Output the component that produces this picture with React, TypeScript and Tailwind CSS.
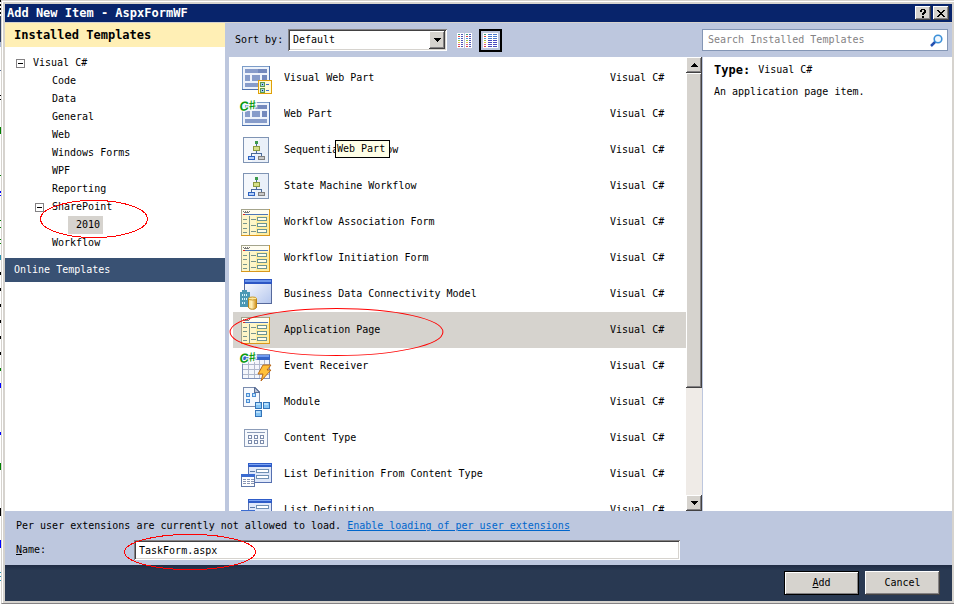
import { useState } from "react";
import type { ReactNode } from "react";

const BEVEL =
  "bg-[#d6d3ce] shadow-[inset_-1px_-1px_#424142,inset_1px_1px_#fff,inset_-2px_-2px_#848284]";
const SUNKEN =
  "bg-white shadow-[inset_1px_1px_#848284,inset_-1px_-1px_#fff,inset_2px_2px_#424142,inset_-2px_-2px_#d6d3ce]";

function Icon({ children }: { children: ReactNode }) {
  return (
    <svg viewBox="0 0 36 36" className="h-9 w-9 shrink-0" shapeRendering="crispEdges" aria-hidden="true">
      {children}
    </svg>
  );
}

function SharpBadge() {
  return (
    <text
      x="2"
      y="15"
      className="font-['Liberation_Sans',sans-serif] text-[13px] font-bold italic"
      fill="#0a9a10"
      stroke="#fff"
      strokeWidth="2"
      paintOrder="stroke"
      transform="rotate(-8 3 15)"
    >
      C#
    </text>
  );
}

function WebPartBase() {
  return (
    <>
      <rect x="4.5" y="6.5" width="27" height="23" fill="#eef3fb" stroke="#4f72ad" />
      <path d="M4.5 29V6.5H31" fill="none" stroke="#7c9cc8" />
      <g fill="#879cca">
        <rect x="7" y="9" width="22" height="4" />
        <rect x="7" y="15" width="5" height="6" />
        <rect x="14" y="15" width="8" height="6" />
        <rect x="24" y="15" width="5" height="6" />
        <rect x="7" y="23" width="22" height="4" />
      </g>
      <path d="M20 9h9v4h-9zM24 15h5v6h-5z" fill="#7389bd" />
    </>
  );
}

function VisualWebPartIcon() {
  return (
    <Icon>
      <WebPartBase />
      <rect x="20.5" y="20.5" width="13" height="13" fill="#fffbd6" stroke="#e0a008" />
      <path d="M22 22h5v5h-5zM22 28h5v5h-5z" fill="#5f9a4a" />
      <path d="M23 23h3v3h-3zM23 29h3v3h-3z" fill="#9fd0e8" />
      <path d="M24 24h1v1h-1zM24 30h1v1h-1z" fill="#00206a" />
      <path d="M28 24h3v1h-3zM28 30h3v1h-3z" fill="#3d6fd0" />
    </Icon>
  );
}

function WebPartIcon() {
  return (
    <Icon>
      <WebPartBase />
      <SharpBadge />
    </Icon>
  );
}

function WorkflowIcon() {
  return (
    <Icon>
      <rect x="5.5" y="5.5" width="25" height="25" fill="#f5f8fc" stroke="#7f94b4" />
      <path d="M22 6h8v24H14z" fill="#eaf0f9" />
      <path d="M18.5 11v10M13.5 24v-2.5h10V24" fill="none" stroke="#4a6a9a" />
      <rect x="17" y="9" width="3" height="3" fill="#3c9a4c" />
      <rect x="15.5" y="14.5" width="6" height="4" fill="#d6e088" stroke="#8c9a40" />
      <rect x="10.5" y="24.5" width="6" height="3" fill="#b4d0fa" stroke="#2e62c0" />
      <rect x="20.5" y="24.5" width="6" height="3" fill="#c8c8c8" stroke="#808080" />
    </Icon>
  );
}

function FormIcon() {
  return (
    <Icon>
      <rect x="3" y="5" width="29" height="27" fill="#fff6c8" />
      <path d="M18 12h13v19H18z" fill="#ffeea0" />
      <path d="M4 6h27v4H4z" fill="#fffdf0" />
      <path d="M3.5 32V5.5H31" fill="none" stroke="#a4a48c" />
      <path d="M31.5 5v26.5H3" fill="none" stroke="#d9981c" />
      <path d="M5 7h1v1h1V7h1v1h1V7h1v1h1V7h1v1h-1v1H6V8H5z" fill="#777" />
      <path d="M5 10h25v1H5z" fill="#4d76b8" />
      <path d="M5 10h2v1H5z" fill="#e02020" />
      <g fill="#78948c">
        <path d="M11 12h1v19h-1zM5 15h4v1H5zM5 19h4v1H5zM5 24h4v1H5zM5 28h4v1H5z" />
        <path d="M13 15h5v1h-5zM13 21h5v1h-5zM13 27h5v1h-5z" />
      </g>
      <g fill="#fffdea" stroke="#6c9494">
        <rect x="19.5" y="13.5" width="9" height="3" />
        <rect x="19.5" y="19.5" width="9" height="3" />
        <rect x="19.5" y="25.5" width="9" height="3" />
      </g>
    </Icon>
  );
}

function DataModelIcon() {
  return (
    <Icon>
      <defs>
        <linearGradient id="window-fill" x1="0" y1="0" x2="1" y2="1">
          <stop offset="0" stopColor="#fff" />
          <stop offset="1" stopColor="#b4c6ee" />
        </linearGradient>
        <linearGradient id="drum-fill">
          <stop offset="0" stopColor="#ffe08a" />
          <stop offset="0.4" stopColor="#fff0b8" />
          <stop offset="1" stopColor="#d08c10" />
        </linearGradient>
      </defs>
      <rect x="6.5" y="3.5" width="27" height="24" fill="url(#window-fill)" stroke="#56699c" />
      <path d="M6 3h28v5H6z" fill="#2c56c4" />
      <path d="M7 4h26v2H7z" fill="#6a94ea" />
      <path d="M4 14h5v2h3v15H2V16h2z" fill="#4c98b4" />
      <g fill="#d4f2fa">
        <path d="M4 18h1v2H4zM6 18h1v2H6zM8 18h1v2H8zM4 22h1v2H4zM6 22h1v2H6zM8 22h1v2H8zM4 26h1v2H4zM6 26h1v2H6z" />
      </g>
      <g shapeRendering="auto">
        <path d="M10.500 23v8c0 3 8 3 8 0v-8z" fill="url(#drum-fill)" stroke="#b88418" />
        <ellipse cx="14.500" cy="22.500" rx="4" ry="1.500" fill="#ffeaa0" stroke="#c89828" />
      </g>
    </Icon>
  );
}

function EventReceiverIcon() {
  return (
    <Icon>
      <rect x="4.5" y="6.5" width="27" height="24" fill="#f4f6fc" stroke="#7c8eb8" />
      <path d="M5 7h27v5H5z" fill="#3563c8" />
      <path d="M5 7h26v2H5z" fill="#6f9af0" />
      <path d="M5 16.500h26M5 21.500h26M5 26.500h26M10.500 12v18M16.500 12v18M21.500 12v18M26.500 12v18" stroke="#b0b8cc" />
      <path
        d="M25 17h8l-4 5h4L23 33l2-7h-5z"
        fill="#ffc03a"
        stroke="#b8681c"
        shapeRendering="auto"
        strokeLinejoin="round"
      />
      <SharpBadge />
    </Icon>
  );
}

function ModuleIcon() {
  return (
    <Icon>
      <path d="M5.500 3.500h12l4 4v15h-16z" fill="#f6f9fe" stroke="#7a8cae" />
      <path d="M16.500 3.500v5h5z" fill="#b8c4d8" stroke="#5c6e94" />
      <g fill="#bfe4fa" stroke="#4c8cd4">
        <rect x="8.5" y="9.5" width="3" height="3" />
        <rect x="14.5" y="9.5" width="3" height="3" />
        <rect x="8.5" y="15.5" width="3" height="3" />
      </g>
      <g fill="#86c4f4" stroke="#3474b8">
        <rect x="17.5" y="18.5" width="6" height="6" />
        <rect x="25.5" y="18.5" width="6" height="6" />
        <rect x="17.5" y="26.5" width="6" height="6" />
      </g>
      <path d="M18 19h4v2h-4zM26 19h4v2h-4zM18 27h4v2h-4z" fill="#b8e0fc" />
    </Icon>
  );
}

function ContentTypeIcon() {
  return (
    <Icon>
      <rect x="6.5" y="9.5" width="23" height="17" fill="#f6f9fd" stroke="#8c9cb8" />
      <path d="M9 12h18v1H9z" fill="#8c9cb8" />
      <g fill="#fff" stroke="#7c8cac">
        <rect x="10.5" y="15.5" width="3" height="3" />
        <rect x="16.5" y="15.5" width="3" height="3" />
        <rect x="22.5" y="15.5" width="3" height="3" />
        <rect x="10.5" y="20.5" width="3" height="3" />
        <rect x="16.5" y="20.5" width="3" height="3" />
        <rect x="22.5" y="20.5" width="3" height="3" />
      </g>
    </Icon>
  );
}

function ListDefinitionIcon() {
  return (
    <Icon>
      <rect x="10.5" y="7.5" width="23" height="19" fill="#dfe8fa" stroke="#5670b0" />
      <path d="M10 7h24v4H10z" fill="#2e5cc8" />
      <path d="M11 8h22v1H11z" fill="#7ca4f4" />
      <path d="M12 15h5v1h-5zM14 21h3v1h-3z" fill="#5a7aa8" />
      <g fill="#fff" stroke="#7090b4">
        <rect x="18.5" y="13.5" width="12" height="3" />
        <rect x="18.5" y="19.5" width="12" height="3" />
      </g>
      <rect x="3.5" y="18.5" width="13" height="12" fill="#fff" stroke="#6078a8" />
      <path d="M3 18h14v3H3z" fill="#3c6cd0" />
      <path d="M5 23.500h11M5 25.500h11M5 27.500h11" stroke="#8a96b4" strokeDasharray="3 1" />
    </Icon>
  );
}

function Ring({ className }: { className: string }) {
  return (
    <svg
      viewBox="0 0 100 100"
      preserveAspectRatio="none"
      className={`pointer-events-none absolute z-10 max-w-none overflow-visible ${className}`}
      shapeRendering="crispEdges"
      aria-hidden="true"
    >
      <ellipse cx="50" cy="50" rx="49.500" ry="49" fill="none" stroke="#f00" vectorEffect="non-scaling-stroke" />
    </svg>
  );
}

const TEMPLATES: { name: string; icon: () => ReactNode; tip?: string; ring?: boolean }[] = [
  { name: "Visual Web Part", icon: VisualWebPartIcon },
  { name: "Web Part", icon: WebPartIcon },
  { name: "Sequential Workflow", icon: WorkflowIcon, tip: "Web Part" },
  { name: "State Machine Workflow", icon: WorkflowIcon },
  { name: "Workflow Association Form", icon: FormIcon },
  { name: "Workflow Initiation Form", icon: FormIcon },
  { name: "Business Data Connectivity Model", icon: DataModelIcon },
  { name: "Application Page", icon: FormIcon, ring: true },
  { name: "Event Receiver", icon: EventReceiverIcon },
  { name: "Module", icon: ModuleIcon },
  { name: "Content Type", icon: ContentTypeIcon },
  { name: "List Definition From Content Type", icon: ListDefinitionIcon },
  { name: "List Definition", icon: ListDefinitionIcon },
];

function Collapse({ label }: { label: string }) {
  return (
    <button
      type="button"
      aria-label={label}
      className="flex h-[9px] w-[9px] shrink-0 items-center justify-center border border-[#848284] bg-white"
    >
      <span className="h-px w-[5px] bg-black" />
    </button>
  );
}

function TreeLeaf({ name }: { name: string }) {
  return (
    <li className="h-[18px] pl-[47px]">
      <button type="button" className="leading-[18px]">{name}</button>
    </li>
  );
}

/* Sliver of the editor window that stays visible left of the dialog. */
const EDITOR_MARKS: [number, number, string][] = [
  [0, 2, "#000"], [4, 2, "#000"], [8, 2, "#000"], [12, 2, "#000"], [16, 26, "#2a3b5e"],
  [42, 5, "#aab8d4"], [70, 1, "#5a7094"], [95, 1, "#000"], [99, 1, "#000"], [127, 7, "#008000"],
  [175, 1, "#008000"], [191, 2, "#00f"], [195, 1, "#00f"], [220, 1, "#008000"], [227, 1, "#008000"],
  [239, 1, "#008000"], [243, 1, "#008000"], [255, 5, "#2b91af"], [272, 3, "#000"], [288, 3, "#000"],
  [304, 3, "#000"], [320, 3, "#000"], [336, 3, "#000"], [352, 3, "#000"], [368, 3, "#008000"],
  [383, 5, "#00f"], [432, 3, "#00f"], [463, 7, "#008000"], [508, 8, "#000"], [540, 8, "#00f"],
  [572, 1, "#2b91af"], [576, 1, "#2b91af"], [580, 1, "#2b91af"],
];

export default function App() {
  const [selected, setSelected] = useState("Application Page");

  return (
    <div className="flex h-screen w-full overflow-hidden bg-white font-['DejaVu_Sans_Mono','Liberation_Mono',monospace] text-[10px] leading-3 text-black">
      <svg className="h-full w-px shrink-0" aria-hidden="true">
        {EDITOR_MARKS.map(([y, h, color]) => (
          <rect key={y} x="0" y={y} width="1" height={h} fill={color} />
        ))}
      </svg>

      <div className="flex min-w-0 flex-1 flex-col border-b border-l border-t border-b-[#848284] border-l-[#d6d3ce] border-t-[#d6d3ce]">
        <div className="flex min-h-0 flex-1 flex-col border-l border-t border-white">
          <div className="flex min-h-0 flex-1 flex-col border-2 border-[#d6d3ce]">
            <header className="flex h-[18px] shrink-0 items-center bg-[#08246b] pl-[2px] pr-[3px] text-white">
              <h1 className="flex-1 whitespace-pre text-[12px] font-bold">Add New Item - AspxFormWF</h1>
              <div className="flex gap-[2px] text-black">
                <button type="button" aria-label="Help" className={`flex h-[14px] w-4 items-center justify-center ${BEVEL}`}>
                  <svg viewBox="0 0 8 9" className="h-[9px] w-2" shapeRendering="crispEdges" aria-hidden="true">
                    <path d="M2 0h4v1h1v3H6v1H5v1H3V4h1V3h1V1H3v2H1V1h1zM3 7h2v2H3z" />
                  </svg>
                </button>
                <button type="button" aria-label="Close" className={`flex h-[14px] w-4 items-center justify-center ${BEVEL}`}>
                  <svg viewBox="0 0 8 7" className="h-[7px] w-2" shapeRendering="crispEdges" aria-hidden="true">
                    <path d="M0 0h2v1h1v1h2V1h1V0h2v1H7v1H6v1H5v1h1v1h1v1h1v1H6V6H5V5H3v1H2v1H0V6h1V5h1V4h1V3H2V2H1V1H0z" />
                  </svg>
                </button>
              </div>
            </header>

            <div className="flex min-h-0 flex-1 border-t border-[#d6d3ce] bg-[#bdc7de]">
              <nav className="w-[220px] shrink-0 bg-white" aria-label="Template categories">
                <h2 className="bg-[#ffefb5] pl-[9px] text-[12px] font-bold leading-6">Installed Templates</h2>
                <ul className="pb-[6px] pt-[7px]">
                  <li>
                    <div className="flex h-[18px] items-center gap-2 pl-[11px]">
                      <Collapse label="Collapse Visual C#" />
                      <button type="button">Visual C#</button>
                    </div>
                    <ul>
                      <TreeLeaf name="Code" />
                      <TreeLeaf name="Data" />
                      <TreeLeaf name="General" />
                      <TreeLeaf name="Web" />
                      <TreeLeaf name="Windows Forms" />
                      <TreeLeaf name="WPF" />
                      <TreeLeaf name="Reporting" />
                      <li>
                        <div className="flex h-[18px] items-center gap-2 pl-[30px]">
                          <Collapse label="Collapse SharePoint" />
                          <button type="button">SharePoint</button>
                        </div>
                        <ul>
                          <li className="relative h-[18px] pl-[63px]">
                            <button type="button" className="bg-[#d6d3ce] pl-2 pr-[3px] leading-[18px]">2010</button>
                            <Ring className="-top-4 left-[35px] h-[38px] w-[108px]" />
                          </li>
                        </ul>
                      </li>
                      <TreeLeaf name="Workflow" />
                    </ul>
                  </li>
                </ul>
                <button type="button" className="block w-full bg-[#395173] pl-[9px] text-left leading-6 text-white">
                  Online Templates
                </button>
              </nav>

              <div className="ml-1 flex min-w-0 flex-1 flex-col">
                <div className="flex h-[34px] shrink-0 items-center pl-[6px] pr-1">
                  <label htmlFor="sort" className="w-[53px]">Sort by:</label>
                  <div className="relative">
                    <select
                      id="sort"
                      defaultValue="Default"
                      className={`block h-[22px] w-[159px] appearance-none pl-[5px] pr-5 outline-none ${SUNKEN}`}
                    >
                      <option>Default</option>
                      <option>Name Ascending</option>
                      <option>Name Descending</option>
                    </select>
                    <span className={`pointer-events-none absolute bottom-[2px] right-[2px] top-[2px] flex w-4 items-center justify-center ${BEVEL}`}>
                      <svg viewBox="0 0 7 4" className="h-1 w-[7px]" shapeRendering="crispEdges" aria-hidden="true">
                        <path d="M0 0h7v1H6v1H5v1H4v1H3V3H2V2H1V1H0z" />
                      </svg>
                    </span>
                  </div>
                  <button type="button" aria-label="Small icons" className="ml-[10px]">
                    <svg viewBox="0 0 15 15" className="block h-[15px] w-[15px]" shapeRendering="crispEdges" aria-hidden="true">
                      <path d="M0 0h7v15H0zM8 0h7v15H8z" fill="#fff" />
                      {[1, 3, 5, 7, 9, 11, 13].map((y, i) => (
                        <g key={y}>
                          <path
                            d={`M1 ${y}h2v1h-2zM9 ${y}h2v1h-2z`}
                            fill={["#3d9a80", "#e04040", "#4a9ad8", "#98c848", "#e8c040", "#d05890", "#e04040"][i]}
                          />
                          <path d={`M4 ${y}h2v1h-2zM12 ${y}h2v1h-2z`} fill="#5058b8" />
                        </g>
                      ))}
                    </svg>
                  </button>
                  <button
                    type="button"
                    aria-label="Medium icons"
                    aria-pressed="true"
                    className="ml-[7px] border-2 border-black p-[2px]"
                  >
                    <svg viewBox="0 0 15 15" className="block h-[15px] w-[15px]" shapeRendering="crispEdges" aria-hidden="true">
                      <path d="M0 0h15v15H0z" fill="#fff" />
                      {[1, 3, 5, 7, 9, 11, 13].map((y, i) => (
                        <g key={y}>
                          <path
                            d={`M1 ${y}h2v1h-2z`}
                            fill={["#3d9a80", "#e04040", "#4a9ad8", "#98c848", "#e8c040", "#d05890", "#e04040"][i]}
                          />
                          <path d={`M5 ${y}h4v1h-4zM10 ${y}h4v1h-4z`} fill={i < 3 ? "#4878d0" : "#4848c0"} />
                        </g>
                      ))}
                    </svg>
                  </button>
                  <div className="ml-auto flex h-[22px] w-[246px] items-center border border-[#8496b5] bg-white pl-[5px] pr-1">
                    <input
                      type="search"
                      aria-label="Search Installed Templates"
                      placeholder="Search Installed Templates"
                      className="min-w-0 flex-1 bg-transparent outline-none placeholder:text-[#848284]"
                    />
                    <svg viewBox="0 0 13 13" className="h-[13px] w-[13px]" fill="none" aria-hidden="true">
                      <path d="M1 12l5-5" stroke="#2450b0" strokeWidth="2.500" />
                      <circle cx="8" cy="5" r="3.800" stroke="#3c90d8" strokeWidth="1.600" fill="#f0f8ff" />
                    </svg>
                  </div>
                </div>

                <div className="flex min-h-0 flex-1">
                  <div className="flex min-w-0 flex-1 bg-white">
                    <ul className="min-w-0 flex-1 overflow-hidden pl-1 pt-[3px]" aria-label="Templates">
                      {TEMPLATES.map(({ name, icon: TemplateIcon, tip, ring }) => (
                        <li key={name} className="relative">
                          <button
                            type="button"
                            onClick={() => setSelected(name)}
                            className={`flex h-9 w-full items-center pl-[5px] text-left ${selected === name ? "bg-[#d6d3ce]" : ""}`}
                          >
                            <TemplateIcon />
                            <span className="ml-[10px] min-w-0 flex-1 truncate">{name}</span>
                            <span className="w-[76px] shrink-0">Visual C#</span>
                          </button>
                          {tip && (
                            <span role="tooltip" className="absolute left-[102px] top-2 border border-black bg-[#ffffe7] pl-px pr-1 leading-4">
                              {tip}
                            </span>
                          )}
                          {ring && <Ring className="-left-1 -top-1 h-12 w-[215px]" />}
                        </li>
                      ))}
                    </ul>
                    <div className="flex w-4 shrink-0 flex-col bg-[#efebe7]">
                      <button type="button" aria-label="Scroll up" className={`flex h-4 shrink-0 items-center justify-center ${BEVEL}`}>
                        <svg viewBox="0 0 7 4" className="h-1 w-[7px]" shapeRendering="crispEdges" aria-hidden="true">
                          <path d="M3 0h1v1h1v1h1v1h1v1H0V3h1V2h1V1h1z" />
                        </svg>
                      </button>
                      <div className={`flex-[315] ${BEVEL}`} />
                      <div className="flex-[107]" />
                      <button type="button" aria-label="Scroll down" className={`flex h-4 shrink-0 items-center justify-center ${BEVEL}`}>
                        <svg viewBox="0 0 7 4" className="h-1 w-[7px]" shapeRendering="crispEdges" aria-hidden="true">
                          <path d="M0 0h7v1H6v1H5v1H4v1H3V3H2V2H1V1H0z" />
                        </svg>
                      </button>
                    </div>
                  </div>
                  <aside className="ml-px w-[249px] shrink-0 bg-white pl-[11px] pt-[7px]">
                    <p className="flex gap-2">
                      <b className="text-[12px]">Type:</b>
                      <span>Visual C#</span>
                    </p>
                    <p className="mt-[10px]">An application page item.</p>
                  </aside>
                </div>
              </div>
            </div>

            <section className="shrink-0 bg-[#bdc7de] pb-[5px] pl-[11px] pt-[9px]">
              <p className="whitespace-pre">
                Per user extensions are currently not allowed to load.{" "}
                <a href="#extensions" className="text-[#0066cc] underline">Enable loading of per user extensions</a>
              </p>
              <div className="mt-2 flex items-center">
                <label htmlFor="name" className="w-[118px]">
                  <u>N</u>ame:
                </label>
                <div className="relative mr-[272px] flex-1">
                  <input
                    id="name"
                    type="text"
                    defaultValue="TaskForm.aspx"
                    className={`block h-5 w-full pl-[5px] outline-none ${SUNKEN}`}
                  />
                  <Ring className="-left-[10px] -top-[6px] h-9 w-[132px]" />
                </div>
              </div>
            </section>

            <footer className="flex h-9 shrink-0 items-start justify-end gap-[6px] bg-[#293952] bg-linear-to-b from-[#202c44] to-[#293952] to-15% pr-3 pt-[6px]">
              <button type="submit" className="h-6 w-[75px] border border-black bg-[#d6d3ce] shadow-[inset_1px_1px_#fff,inset_-1px_-1px_#848284]">
                <u>A</u>dd
              </button>
              <button type="button" className={`h-6 w-[75px] ${BEVEL}`}>Cancel</button>
            </footer>
          </div>
        </div>
      </div>
    </div>
  );
}
